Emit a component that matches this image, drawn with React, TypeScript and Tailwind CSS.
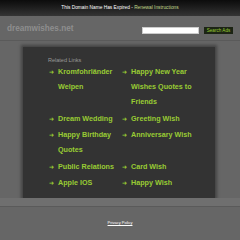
const LINKS: string[][] = [
  ["Kromfohrländer Welpen", "Happy New Year Wishes Quotes to Friends"],
  ["Dream Wedding", "Greeting Wish"],
  ["Happy Birthday Quotes", "Anniversary Wish"],
  ["Public Relations", "Card Wish"],
  ["Apple IOS", "Happy Wish"],
];

function LinkItem({ label }: { label: string }) {
  return (
    <div className="flex text-[7.2px] leading-[15px] font-bold text-[#99cc33]">
      <span className="w-[9px] shrink-0 font-['DejaVu_Sans',sans-serif] text-[6px]">➜</span>
      <span>{label}</span>
    </div>
  );
}

export default function App() {
  return (
    <div className="h-[240px] w-[240px] overflow-hidden bg-[#666] font-['Liberation_Sans',Arial,sans-serif]">
      <div className="h-[16px] bg-gradient-to-b from-[#0c0c0c] to-[#353535] flex items-center justify-center text-[4.8px] text-white">
        This Domain Name Has Expired -&nbsp;<span className="text-[#c0d98a]">Renewal Instructions</span>
      </div>

      <div className="h-[25px] flex items-start pt-[8px] px-[7px] border-b border-[#5a5a5a]">
        <span className="text-[8.2px] leading-[10px] font-bold text-[#8e8e8e]">dreamwishes.net</span>
        <div className="ml-auto mt-[3px] w-[57px] h-[7px] bg-white border border-[#ccc]" />
        <div className="ml-[5px] mt-[3px] w-[29px] h-[7px] bg-[#1c2414] text-[#99cc33] text-[4.6px] leading-[7px] text-center">
          Search Ads
        </div>
      </div>

      <div className="pt-[6px]">
        <div className="mx-[23px] w-[192px] h-[151px] bg-[#333] shadow-[0_0_3px_2px_rgba(0,0,0,0.35)] pl-[25px] pt-[10px]">
          <div className="text-[5.5px] leading-[6px] text-[#999]">Related Links</div>
          <div className="ml-[1px] mt-[1px] flex flex-col gap-[1.6px]">
            {LINKS.map((row, i) => (
              <div key={i} className="grid grid-cols-[73px_73px]">
                <LinkItem label={row[0]} />
                <LinkItem label={row[1]} />
              </div>
            ))}
          </div>
        </div>
      </div>

      <div className="h-[9px] bg-[#6f6f6f] border-b border-[#5a5a5a]" />

      <div className="pt-[13px] text-center text-[4px] text-white underline">Privacy Policy</div>
    </div>
  );
}
